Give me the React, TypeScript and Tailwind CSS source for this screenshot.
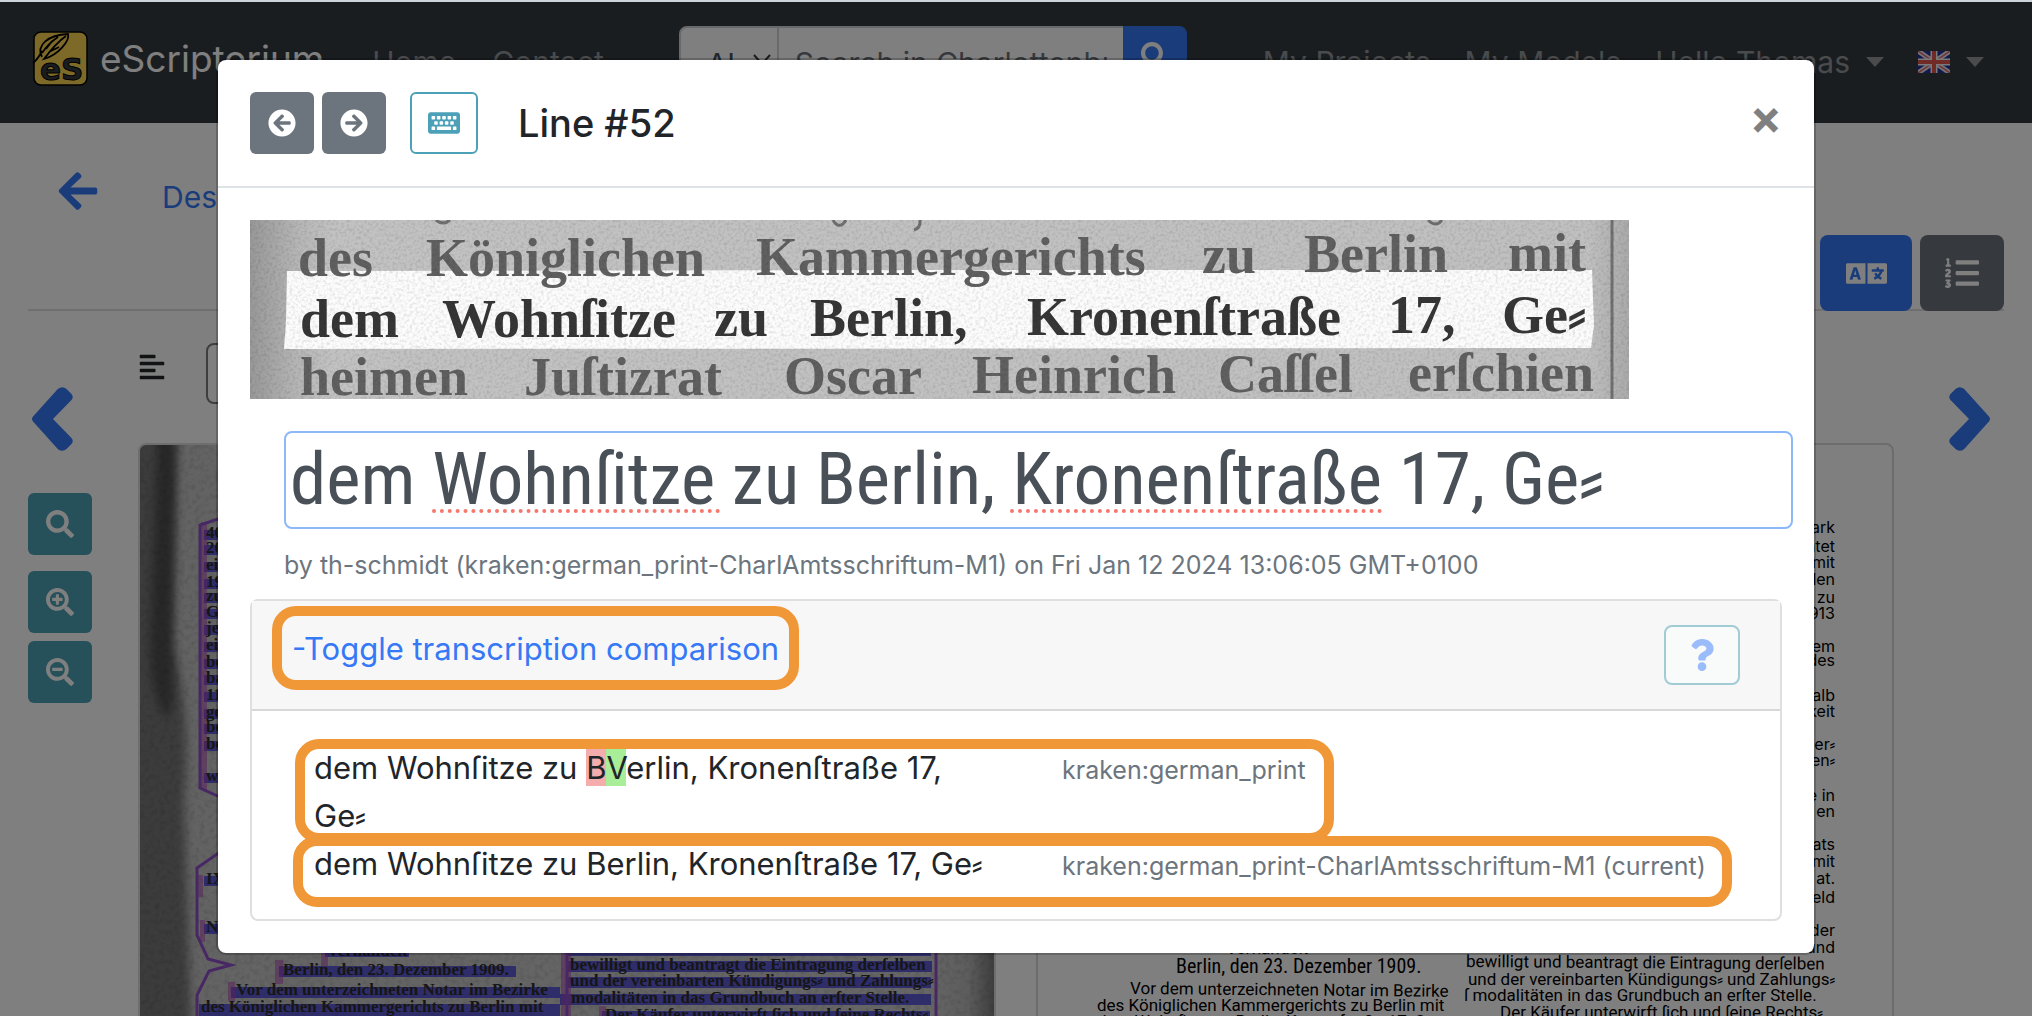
import React from "react";
import {
  FaAlignLeft,
  FaArrowCircleLeft,
  FaArrowCircleRight,
  FaArrowLeft,
  FaKeyboard,
  FaLanguage,
  FaListOl,
  FaQuestion,
  FaSearch,
  FaSearchMinus,
  FaSearchPlus,
} from "react-icons/fa";

type Word = { x: number; y: number; text: string };

const SCAN_CONTEXT: Word[] = [
  { x: 48, y: 56, text: "des" },
  { x: 176, y: 56, text: "Königlichen" },
  { x: 506, y: 55, text: "Kammergerichts" },
  { x: 952, y: 53, text: "zu" },
  { x: 1054, y: 52, text: "Berlin" },
  { x: 1258, y: 51, text: "mit" },
  { x: 50, y: 175, text: "heimen" },
  { x: 274, y: 175, text: "Juſtizrat" },
  { x: 534, y: 174, text: "Oscar" },
  { x: 722, y: 173, text: "Heinrich" },
  { x: 968, y: 172, text: "Caſſel" },
  { x: 1158, y: 171, text: "erſchien" },
];

const SCAN_LINE: Word[] = [
  { x: 50, y: 117, text: "dem" },
  { x: 192, y: 117, text: "Wohnſitze" },
  { x: 464, y: 116, text: "zu" },
  { x: 560, y: 116, text: "Berlin," },
  { x: 777, y: 115, text: "Kronenſtraße" },
  { x: 1138, y: 113, text: "17," },
  { x: 1252, y: 113, text: "Ge⸗" },
];

const MARGIN_LINES: [number, string][] = [
  [535, "40"], [550, "20"], [567, "ei"], [584, "19"], [598, "zu"], [614, "Ge"], [630, "je"], [647, "ei"],
  [664, "be"], [680, "ba"], [697, "11"], [714, "ge"], [729, "be"], [746, "be"], [778, "w"], [881, "IX"], [929, "Ne"],
];

const EDGE_LINES: [number, string][] = [
  [533, "Mark"], [552, "htet"], [568, "mit"], [585, "den"], [603, "zu"], [619, "1913"], [652, "dem"], [666, "des"],
  [701, "halb"], [717, "keit"], [750, "er⸗"], [766, "en⸗"], [801, "e in"], [817, "en"], [850, "ats"], [867, "mit"],
  [884, "at."], [903, "eld"], [936, "der"], [953, "und"],
];

function Logo() {
  return (
    <svg width="56" height="56" viewBox="0 0 56 56" aria-hidden="true">
      <rect x="2" y="1" width="53" height="53" rx="7" fill="#fcd450" stroke="#000" strokeWidth="1.5" />
      <path
        d="M1 32 C6 28 8 24 10 20 M10 26 C4 14 16 4 36 3 C38 10 26 24 12 28 C18 20 24 12 34 5 M10 22 C14 16 20 10 26 6 M14 18 l6 -8 M17 21 l10 -5"
        fill="none"
        stroke="#000"
        strokeWidth="1.8"
      />
      <text x="8" y="49" fontFamily="DejaVu Sans" fontWeight="700" fontSize="31" fill="#343a40" stroke="#000" strokeWidth="1">
        eS
      </text>
    </svg>
  );
}

function Flag() {
  return (
    <svg width="32" height="22" viewBox="0 0 32 22" aria-hidden="true">
      <rect width="32" height="22" fill="#22339a" />
      <path d="M0 0 L32 22 M32 0 L0 22" stroke="#e8e8f4" strokeWidth="5" />
      <path d="M0 0 L32 22 M32 0 L0 22" stroke="#e07070" strokeWidth="1.6" />
      <path d="M16 0 V22 M0 11 H32" stroke="#f4f4fa" strokeWidth="7" />
      <path d="M16 0 V22 M0 11 H32" stroke="#e0574f" strokeWidth="4" />
    </svg>
  );
}

function Caret() {
  return (
    <svg width="18" height="10" viewBox="0 0 18 10" fill="currentColor" aria-hidden="true">
      <path d="M0 0h18l-9 10z" />
    </svg>
  );
}

function Chevron({ className = "" }: { className?: string }) {
  return (
    <svg width="41" height="64" viewBox="0 0 41 64" fill="currentColor" className={className} aria-hidden="true">
      <path d="M1 29.5L26 1.8Q30.500 -1.500 34.500 2L39.500 7Q42 10 39.500 13L21 32L39.500 51Q42 54 39.500 57L34.500 62Q30.500 65.500 26 62.200L1 34.500Q-1 32 1 29.500Z" />
    </svg>
  );
}

function LineScan() {
  return (
    <svg viewBox="0 0 1379 179" className="block w-full max-w-[1379px]" role="img" aria-label="Scanned line 52">
      <defs>
        <linearGradient id="scanEdge">
          <stop offset="0" stopColor="#989898" />
          <stop offset="0.035" stopColor="#b6b6b6" />
          <stop offset="0.06" stopColor="#c2c2c2" />
          <stop offset="0.97" stopColor="#c0c0c0" />
          <stop offset="1" stopColor="#aaaaaa" />
        </linearGradient>
        <filter id="grain" x="0" y="0" width="100%" height="100%">
          <feTurbulence type="fractalNoise" baseFrequency="0.35" numOctaves="2" />
          <feColorMatrix values="0 0 0 0 0  0 0 0 0 0  0 0 0 0 0  0.26 0 0 0 -0.11" />
        </filter>
      </defs>
      <rect width="1379" height="179" fill="url(#scanEdge)" />
      <path d="M37 51L700 50L1342 50L1344 105L1341 128L34 129L36 100Z" fill="#fcfcfc" />
      <path d="M1362 0V179" stroke="#707070" strokeWidth="3" />
      <g fontFamily="Liberation Serif, serif" fontWeight="700" fontSize="54">
        <g fill="#606060">
          {SCAN_CONTEXT.map((w) => (
            <text key={w.text} x={w.x} y={w.y}>
              {w.text}
            </text>
          ))}
        </g>
        <g fill="#363636">
          {SCAN_LINE.map((w) => (
            <text key={w.text} x={w.x} y={w.y}>
              {w.text}
            </text>
          ))}
        </g>
      </g>
      <path d="M186 0q7 6 14 0M583 0q4 8 10 4l3-4M670 0q1 8-6 10M1178 0q8 8 14 0" stroke="#707070" strokeWidth="3" fill="none" />
      <rect width="1379" height="179" filter="url(#grain)" />
    </svg>
  );
}

function PageScan() {
  const bars: [number, number, number, number][] = [
    [325, 946, 84, 11], [279, 966, 237, 11], [231, 987, 329, 11], [199, 1004, 361, 12],
    [567, 945, 364, 11], [567, 961, 365, 11], [568, 977, 363, 11], [560, 994, 371, 11], [602, 1011, 328, 11],
  ];
  return (
    <svg viewBox="140 445 854 600" className="block w-full" role="img" aria-label="Scanned page">
      <defs>
        <linearGradient id="paper">
          <stop offset="0" stopColor="#c4c4c4" />
          <stop offset="0.1" stopColor="#c8c8c8" />
          <stop offset="0.92" stopColor="#cccccc" />
          <stop offset="0.97" stopColor="#bababa" />
          <stop offset="1" stopColor="#7c7c7c" />
        </linearGradient>
        <filter id="pageGrain" x="0" y="0" width="100%" height="100%">
          <feTurbulence type="fractalNoise" baseFrequency="0.2" numOctaves="3" />
          <feColorMatrix values="0 0 0 0 0  0 0 0 0 0  0 0 0 0 0  0.26 0 0 0 -0.11" />
        </filter>
        <filter id="soft" x="-50%" width="200%">
          <feGaussianBlur stdDeviation="5" />
        </filter>
      </defs>
      <rect x="140" y="445" width="854" height="600" fill="url(#paper)" />
      <path d="M120 425H176L172 640Q192 720 184 800L192 1060H120Z" fill="#787878" filter="url(#soft)" />
      <path d="M158 425H176L172 650Q176 700 168 720Q150 700 150 640Z" fill="#505050" filter="url(#soft)" />
      <rect x="140" y="445" width="854" height="600" filter="url(#pageGrain)" />
      <g fill="#4340d8" fillOpacity="0.8">
        {MARGIN_LINES.map(([y]) => (
          <rect key={y} x="204" y={y - 5} width="30" height="10" />
        ))}
        {bars.map(([x, y, w, h]) => (
          <rect key={x + "-" + y} x={x} y={y} width={w} height={h} />
        ))}
      </g>
      <g fill="#b040b8" fillOpacity="0.5">
        <rect x="201" y="522" width="6" height="268" />
        <rect x="198" y="875" width="5" height="22" />
        <rect x="200" y="920" width="5" height="22" />
        <rect x="321" y="944" width="7" height="22" />
        <rect x="275" y="960" width="8" height="24" />
        <rect x="228" y="982" width="7" height="19" />
        <rect x="561" y="950" width="10" height="66" />
        <rect x="599" y="1006" width="7" height="12" />
      </g>
      <g fill="none" stroke="#9050c8" strokeWidth="3">
        <path d="M230 515L200 525V788L222 798" />
        <path d="M230 845L197 868V935L208 959L231 965L209 971L197 995V1050" />
        <path d="M567 950V1050M936 950V1050" />
      </g>
      <g fontFamily="Liberation Serif, serif" fontWeight="700" fontSize="17" fill="#2c2c2c">
        {MARGIN_LINES.map(([y, t]) => (
          <text key={y} x="206" y={y + 3}>
            {t}
          </text>
        ))}
        <text x="327" y="956">Verhandelt</text>
        <text x="283" y="975">Berlin, den 23. Dezember 1909.</text>
        <text x="236" y="995">Vor dem unterzeichneten Notar im Bezirke</text>
        <text x="201" y="1012">des Königlichen Kammergerichts zu Berlin mit</text>
        <text x="570" y="970">bewilligt und beantragt die Eintragung derſelben</text>
        <text x="570" y="986">und der vereinbarten Kündigungs⸗ und Zahlungs⸗</text>
        <text x="571" y="1003">modalitäten in das Grundbuch an erſter Stelle.</text>
        <text x="605" y="1020">Der Käufer unterwirft ſich und ſeine Rechts⸗</text>
      </g>
    </svg>
  );
}

function Transcription() {
  return (
    <svg viewBox="1038 445 854 600" className="block w-full" fontFamily="Inter, sans-serif" fontSize="16" fill="#000" role="img" aria-label="Transcription">
      {EDGE_LINES.map(([y, t]) => (
        <text key={y} x="1835" y={y} textAnchor="end">
          {t}
        </text>
      ))}
      <text x="1226" y="954">Verhandelt</text>
      <text x="1176" y="973" fontFamily="Roboto Condensed, Roboto, sans-serif" fontSize="20">Berlin, den 23. Dezember 1909.</text>
      <g fontFamily="Roboto, sans-serif" fontSize="17">
        <text x="1130" y="994" transform="rotate(0.5 1130 994)">Vor dem unterzeichneten Notar im Bezirke</text>
        <text x="1097" y="1011">des Königlichen Kammergerichts zu Berlin mit</text>
        <text x="1097" y="1027">dem Wohnſitze zu Berlin, Kronenſtraße 17, Ge⸗</text>
        <text x="1466" y="967" transform="rotate(0.4 1466 967)">bewilligt und beantragt die Eintragung derſelben</text>
        <text x="1468" y="985">und der vereinbarten Kündigungs⸗ und Zahlungs⸗</text>
        <text x="1464" y="1001">ſ modalitäten in das Grundbuch an erſter Stelle.</text>
        <text x="1500" y="1018">Der Käufer unterwirft ſich und ſeine Rechts⸗</text>
      </g>
    </svg>
  );
}

function Navbar() {
  return (
    <nav className="flex h-[121px] items-start bg-[#343a40] pt-6 pr-12 pl-8 text-[30px] leading-[48px] text-[#93979a]">
      <a href="#home" className="mt-[5px] flex shrink-0 items-center gap-3 text-[37px] text-white">
        <Logo />
        <span>eScriptorium</span>
      </a>
      <div className="mt-3 ml-12 flex gap-9">
        <a href="#home">Home</a>
        <a href="#contact">Contact</a>
      </div>
      <form className="ml-[75px] flex h-[76px] w-[508px]">
        <div className="relative w-[100px] shrink-0 rounded-l-lg border-2 border-[#ced4da] bg-white">
          <select aria-label="Search scope" className="h-full w-full appearance-none pl-[26px] text-[#495057]">
            <option>Al</option>
          </select>
          <svg className="pointer-events-none absolute top-[26px] right-[6px]" width="18" height="12" viewBox="0 0 18 12" fill="none" stroke="#343a40" strokeWidth="2">
            <path d="M1 1l8 9 8-9" />
          </svg>
        </div>
        <input
          aria-label="Search"
          placeholder="Search in Charlottenburg"
          className="h-[72px] w-[344px] border-t-2 border-[#ced4da] bg-white px-4 text-[30px] placeholder:text-[#6c757d]"
        />
        <button type="button" aria-label="Search" className="flex w-16 justify-center rounded-r-lg bg-[#3579f6] pt-4 text-white">
          <FaSearch size={27} />
        </button>
      </form>
      <div className="mt-3 ml-auto flex shrink-0 gap-[34px]">
        <a href="#projects">My Projects</a>
        <a href="#models">My Models</a>
        <button type="button" className="flex items-center gap-4">
          Hello Thomas <Caret />
        </button>
        <button type="button" aria-label="Language" className="flex items-center gap-4">
          <Flag />
          <Caret />
        </button>
      </div>
    </nav>
  );
}

function Workspace() {
  const tool = "flex h-[62px] w-16 items-center justify-center rounded-md bg-[#4ca1b4] text-white";
  return (
    <div className="px-7">
      <div className="flex h-[188px] justify-between border-b-2 border-[#dedede]">
        <div className="flex items-start gap-[62px] pt-[46px] pl-7 text-[30px] leading-[48px] text-[#3579f6]">
          <a href="#back" aria-label="Back">
            <FaArrowLeft size={44} />
          </a>
          <a href="#description" className="mt-1">Description</a>
        </div>
        <div className="-mb-[2px] flex items-end gap-2 text-white">
          <button type="button" aria-label="Text panel" className="flex h-[76px] w-[92px] items-center justify-center rounded-lg bg-[#3579f6]">
            <FaLanguage size={41} />
          </button>
          <button type="button" aria-label="Line numbering" className="flex h-[76px] w-[84px] items-center justify-center rounded-lg bg-[#6c757d]">
            <FaListOl size={34} />
          </button>
        </div>
      </div>
      <div className="flex">
        <div className="flex w-[110px] shrink-0 flex-col items-start pt-[76px]">
          <button type="button" aria-label="Previous page" className="ml-1 text-[#3579f6]">
            <Chevron />
          </button>
          <button type="button" aria-label="Reset zoom" className={tool + " mt-[42px]"}><FaSearch size={28} /></button>
          <button type="button" aria-label="Zoom in" className={tool + " mt-4"}><FaSearchPlus size={28} /></button>
          <button type="button" aria-label="Zoom out" className={tool + " mt-2"}><FaSearchMinus size={28} /></button>
        </div>
        <div className="flex min-w-0 flex-1 flex-col pt-8">
          <div className="mb-[39px] flex h-[61px] items-center gap-10">
            <FaAlignLeft size={28} className="mb-[14px] text-[#212529]" />
            <div className="h-full w-[300px] rounded-lg border-2 border-[#7b7d80]" />
          </div>
          <div className="grid grid-cols-2 gap-10">
            <div className="overflow-hidden rounded-t-lg border-2 border-[#dcdcdc]"><PageScan /></div>
            <div className="rounded-t-lg border-2 border-[#d8d8d8]"><Transcription /></div>
          </div>
        </div>
        <div className="flex w-[110px] shrink-0 items-start justify-end pt-[76px] pr-[14px]">
          <button type="button" aria-label="Next page" className="text-[#3579f6]">
            <Chevron className="rotate-180" />
          </button>
        </div>
      </div>
    </div>
  );
}

function LineEditor() {
  return (
    <div className="relative mt-8 -mr-[11px] ml-[34px]">
      <input
        aria-label="Transcription"
        spellCheck={false}
        defaultValue="dem Wohnſitze zu Berlin, Kronenſtraße 17, Ge⸗"
        className="block h-[98px] w-full rounded-lg border-2 border-[#8cb8fa] bg-white px-1 font-['Roboto_Condensed',Roboto,sans-serif] text-[73px] text-[#495057] outline-none"
      />
      <span className="absolute bottom-4 left-[148px] w-[288px] border-b-4 border-dotted border-[#f5786e]" />
      <span className="absolute bottom-4 left-[726px] w-[372px] border-b-4 border-dotted border-[#f5786e]" />
    </div>
  );
}

const MARK = "pointer-events-none absolute rounded-3xl border-[10px] border-[#f09837]";

function Comparison() {
  return (
    <section className="rounded-lg border-2 border-[#dfdfdf] text-[31px] leading-[48px]">
      <header className="flex items-start justify-between border-b-2 border-[#d8d8d8] bg-[#f7f7f7] px-10 py-6">
        <div className="relative">
          <button type="button" className="text-[#3579f6]">-Toggle transcription comparison</button>
          <span className={MARK + " -top-[19px] -left-5 h-[84px] w-[527px]"} />
        </div>
        <button type="button" aria-label="Help" className="flex h-[60px] w-[76px] items-center justify-center rounded-lg border-2 border-[#a1ccd6] bg-[#f9fafa] text-[#9abcfa]">
          <FaQuestion size={32} />
        </button>
      </header>
      <div className="pt-[33px] pr-8 pb-[31px] pl-[62px]">
        <div className="relative grid grid-cols-[minmax(0,688px)_1fr] gap-[60px]">
          <p>
            dem Wohnſitze zu <del className="bg-[#f4acac] no-underline">B</del>
            <ins className="bg-[#a8ed98] no-underline">V</ins>erlin, Kronenſtraße 17, Ge⸗
          </p>
          <p className="pt-[2px] text-[25px] text-[#6c757d]">kraken:german_print</p>
          <span className={MARK + " -top-[5px] -left-[19px] h-[104px] w-[1039px]"} />
        </div>
        <div className="relative grid h-12 grid-cols-[minmax(0,688px)_1fr] gap-[60px]">
          <p>dem Wohnſitze zu Berlin, Kronenſtraße 17, Ge⸗</p>
          <p className="pt-[2px] text-[25px] whitespace-nowrap text-[#6c757d]">kraken:german_print-CharlAmtsschriftum-M1 (current)</p>
          <span className={MARK + " -top-1 -left-[21px] h-[71px] w-[1439px]"} />
        </div>
      </div>
    </section>
  );
}

function LineDialog() {
  const nav = "flex h-[62px] w-16 items-center justify-center rounded-md bg-[#6c757d] text-white";
  return (
    <div role="dialog" aria-label="Line #52" className="mx-auto max-w-[1596px] rounded-lg bg-white shadow-[0_0_0_2px_rgba(0,0,0,0.2)]">
      <header className="flex items-start border-b-2 border-[#dee2e6] p-8">
        <button type="button" aria-label="Previous line" className={nav}><FaArrowCircleLeft size={28} /></button>
        <button type="button" aria-label="Next line" className={nav + " ml-2"}><FaArrowCircleRight size={28} /></button>
        <button type="button" aria-label="Virtual keyboard" className="ml-6 flex h-[62px] w-[68px] items-center justify-center rounded-md border-2 border-[#4ca1b8] text-[#4ca1b8]">
          <FaKeyboard size={32} />
        </button>
        <h5 className="ml-10 text-[38px] leading-[62px] font-medium">Line #52</h5>
        <button type="button" aria-label="Close" className="ml-auto text-[48px] leading-[50px] font-bold text-[#808080]">×</button>
      </header>
      <div className="p-8">
        <LineScan />
        <LineEditor />
        <p className="mt-4 mb-[14px] ml-[34px] text-[25px] leading-[40px] text-[#6c757d]">
          by th-schmidt (kraken:german_print-CharlAmtsschriftum-M1) on Fri Jan 12 2024 13:06:05 GMT+0100
        </p>
        <Comparison />
      </div>
    </div>
  );
}

export default function App() {
  return (
    <div className="relative h-screen overflow-hidden border-t-2 border-[#cdd5da] bg-white font-[Inter,sans-serif] text-[#212529]">
      <Navbar />
      <Workspace />
      <div className="absolute inset-0 bg-black/50 pt-[58px]">
        <LineDialog />
      </div>
    </div>
  );
}
